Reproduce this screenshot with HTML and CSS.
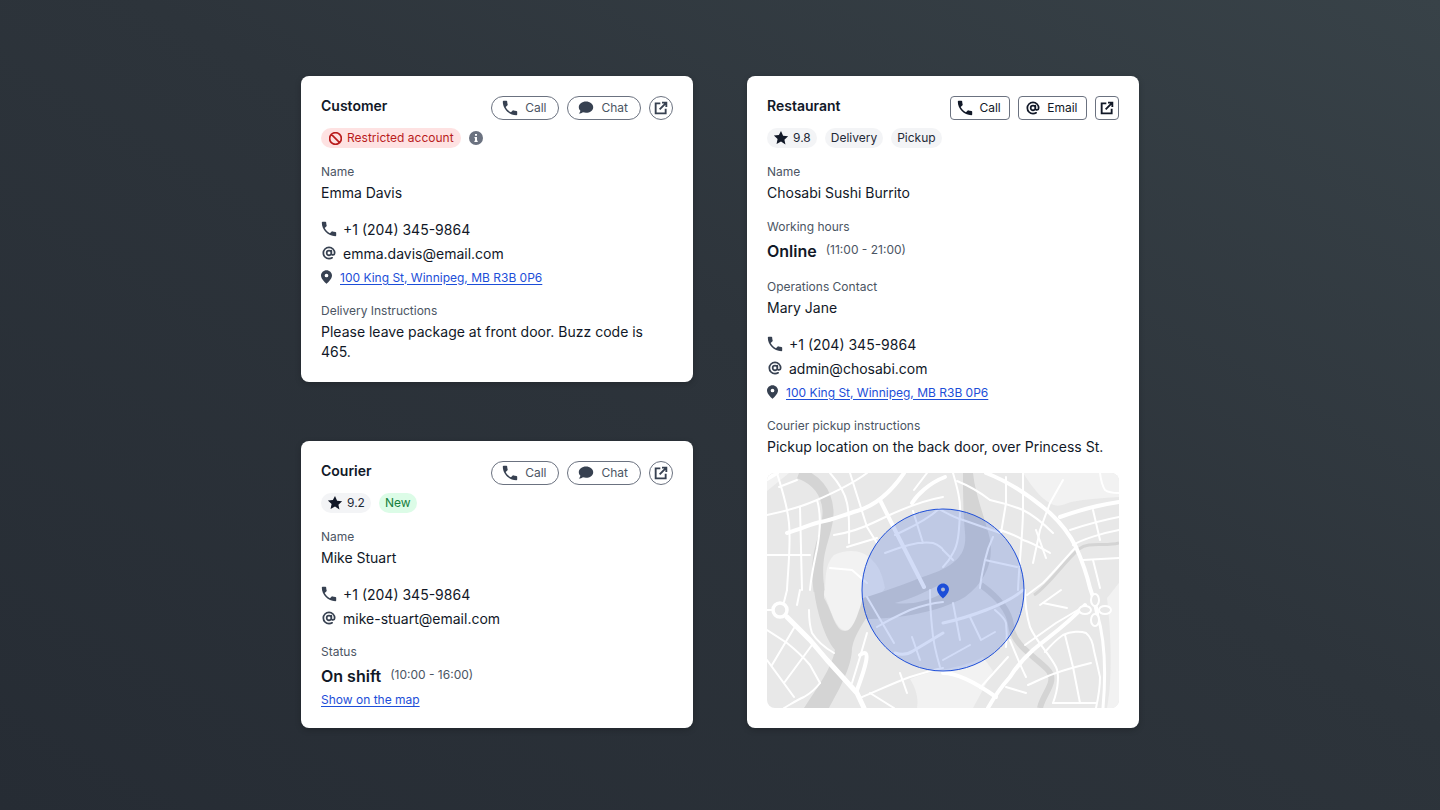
FILE: index.html
```html
<!DOCTYPE html>
<html lang="en">
<head>
    <meta charset="UTF-8">
    <meta name="viewport" content="width=device-width, initial-scale=1.0">
    <title>Order contacts</title>
    <link rel="stylesheet" href="styles.css">
</head>
<body>
    <svg class="sprites" width="0" height="0">
        <symbol id="i-phone" viewBox="2 2 20 20"><path fill="currentColor" d="M6.600 10.800c1.400 2.800 3.800 5.100 6.600 6.600l2.200-2.200c.3-.3.7-.4 1-.2 1.100.4 2.300.6 3.600.6.600 0 1 .4 1 1V20c0 .6-.4 1-1 1C10.600 21 3 13.400 3 4c0-.6.4-1 1-1h3.500c.6 0 1 .4 1 1 0 1.200.2 2.400.6 3.600.1.300 0 .7-.2 1z"/></symbol>
        <symbol id="i-chat" viewBox="2 2 20 20"><path fill="currentColor" d="M12 4c-5 0-9 3.100-9 7 0 1.700.8 3.300 2 4.500-.2 1.400-1 2.600-2 3.500 2 0 3.800-.6 5.200-1.600 1.200.4 2.500.6 3.800.6 5 0 9-3.100 9-7s-4-7-9-7z"/></symbol>
        <symbol id="i-open" viewBox="0 0 24 24"><path fill="none" stroke="currentColor" stroke-width="2.800" d="M11 5H4v15h15v-7M10 14L20 4M13.500 4H20v6.500"/></symbol>
        <symbol id="i-at" viewBox="0 0 24 24"><path fill="none" stroke="currentColor" stroke-width="2.600" stroke-linecap="round" d="M12 15.500a3.500 3.500 0 1 0 0-7 3.500 3.500 0 0 0 0 7zM15.500 8.500v4.200c0 3 5 3 5-.7C20.500 7.300 16.700 3.500 12 3.500S3.500 7.300 3.500 12s3.800 8.500 8.500 8.500c1.800 0 3.300-.4 4.700-1.300"/></symbol>
        <symbol id="i-pin" viewBox="4 2 16 20"><path fill="currentColor" fill-rule="evenodd" d="M12 2c-4.400 0-8 3.500-8 7.900C4 15.500 12 22 12 22s8-6.500 8-12.100C20 5.500 16.400 2 12 2zm0 10.500a2.700 2.700 0 1 1 0-5.400 2.700 2.700 0 0 1 0 5.400z"/></symbol>
        <symbol id="i-star" viewBox="1 1 22 22"><path fill="currentColor" d="M12 2.500l2.900 6.300 6.900.8-5.100 4.700 1.400 6.800L12 16.700l-6.100 3.400 1.400-6.800-5.100-4.700 6.900-.8z"/></symbol>
        <symbol id="i-ban" viewBox="2 2 20 20"><path fill="none" stroke="currentColor" stroke-width="2.600" d="M12 21a9 9 0 1 0 0-18 9 9 0 0 0 0 18zM5.700 5.700l12.600 12.600"/></symbol>
        <symbol id="i-info" viewBox="0 0 14 14"><circle cx="7" cy="7" r="7" fill="currentColor"/><path fill="#fff" d="M6 2.900h2v1.900H6zM5.500 6h2.500v3.700h.7V11H5.400V9.700H6V7.300h-.5z"/></symbol>
    </svg>

    <main class="board">
        <div class="column">
            <section class="card">
                <div class="card-head">
                    <h2>Customer</h2>
                    <div class="actions">
                        <a class="btn pill"><svg class="ico"><use href="#i-phone"/></svg>Call</a>
                        <a class="btn pill"><svg class="ico"><use href="#i-chat"/></svg>Chat</a>
                        <a class="btn pill icon-only"><svg class="ico"><use href="#i-open"/></svg></a>
                    </div>
                </div>
                <div class="tags">
                    <span class="tag danger"><svg class="ico-sm"><use href="#i-ban"/></svg>Restricted account</span>
                    <svg class="info"><use href="#i-info"/></svg>
                </div>
                <div class="field">
                    <div class="label">Name</div>
                    <div class="value">Emma Davis</div>
                </div>
                <ul class="contacts">
                    <li><svg class="ico"><use href="#i-phone"/></svg>+1 (204) 345-9864</li>
                    <li><svg class="ico"><use href="#i-at"/></svg>emma.davis@email.com</li>
                    <li class="address"><svg class="ico-pin"><use href="#i-pin"/></svg><a href="#">100 King St, Winnipeg, MB R3B 0P6</a></li>
                </ul>
                <div class="field">
                    <div class="label">Delivery Instructions</div>
                    <div class="value">Please leave package at front door. Buzz code is 465.</div>
                </div>
            </section>

            <section class="card">
                <div class="card-head">
                    <h2>Courier</h2>
                    <div class="actions">
                        <a class="btn pill"><svg class="ico"><use href="#i-phone"/></svg>Call</a>
                        <a class="btn pill"><svg class="ico"><use href="#i-chat"/></svg>Chat</a>
                        <a class="btn pill icon-only"><svg class="ico"><use href="#i-open"/></svg></a>
                    </div>
                </div>
                <div class="tags">
                    <span class="tag"><svg class="ico-star"><use href="#i-star"/></svg>9.2</span>
                    <span class="tag success">New</span>
                </div>
                <div class="field">
                    <div class="label">Name</div>
                    <div class="value">Mike Stuart</div>
                </div>
                <ul class="contacts">
                    <li><svg class="ico"><use href="#i-phone"/></svg>+1 (204) 345-9864</li>
                    <li><svg class="ico"><use href="#i-at"/></svg>mike-stuart@email.com</li>
                </ul>
                <div class="field">
                    <div class="label">Status</div>
                    <div class="value status"><strong>On shift</strong><span>(10:00 - 16:00)</span></div>
                    <a class="map-link" href="#">Show on the map</a>
                </div>
            </section>
        </div>

        <section class="card">
            <div class="card-head">
                <h2>Restaurant</h2>
                <div class="actions">
                    <a class="btn square"><svg class="ico"><use href="#i-phone"/></svg>Call</a>
                    <a class="btn square"><svg class="ico"><use href="#i-at"/></svg>Email</a>
                    <a class="btn square icon-only"><svg class="ico"><use href="#i-open"/></svg></a>
                </div>
            </div>
            <div class="tags">
                <span class="tag"><svg class="ico-star"><use href="#i-star"/></svg>9.8</span>
                <span class="tag">Delivery</span>
                <span class="tag">Pickup</span>
            </div>
            <div class="field">
                <div class="label">Name</div>
                <div class="value">Chosabi Sushi Burrito</div>
            </div>
            <div class="field">
                <div class="label">Working hours</div>
                <div class="value status"><strong>Online</strong><span>(11:00 - 21:00)</span></div>
            </div>
            <div class="field">
                <div class="label">Operations Contact</div>
                <div class="value">Mary Jane</div>
            </div>
            <ul class="contacts">
                <li><svg class="ico"><use href="#i-phone"/></svg>+1 (204) 345-9864</li>
                <li><svg class="ico"><use href="#i-at"/></svg>admin@chosabi.com</li>
                <li class="address"><svg class="ico-pin"><use href="#i-pin"/></svg><a href="#">100 King St, Winnipeg, MB R3B 0P6</a></li>
            </ul>
            <div class="field">
                <div class="label">Courier pickup instructions</div>
                <div class="value">Pickup location on the back door, over Princess St.</div>
            </div>

            <svg class="map" viewBox="0 0 352 235">
                <rect width="352" height="235" fill="#e8e8e8"/>

                <!-- light blocks -->
                <g fill="#f2f2f2">
                    <path d="M256 0C264 12 274 26 283 30 290 35 296 32 304 29 320 26 336 25 352 24V0z"/>
                    <path d="M67 82C80 76 96 76 106 88 114 96 116 106 118 115 110 128 100 140 92 150 86 158 78 160 72 154 64 144 62 130 57 122 60 108 56 94 67 82z"/>
                    <path d="M340 125C346 118 350 112 352 110V235H340C346 205 344 160 340 125z"/>
                    <path d="M143 206C166 196 196 196 216 184L226 198 206 235H150C152 224 148 214 143 206z"/>
                    <path d="M0 0H22L0 18z"/>
                </g>

                <!-- rivers -->
                <g fill="#d4d4d4">
                    <path d="M47 117C50 140 58 165 68 177 65 195 50 215 37 235H62C70 220 85 195 85 175 88 160 97 150 105 135L95 128C90 145 85 158 78 158 68 158 66 140 57 125L57 110z"/>
                    <path d="M96 125C120 118 150 106 172 98 190 90 200 80 198 60 196 40 196 20 196 0H206C208 20 216 40 222 62 228 85 220 108 198 124 170 140 130 146 98 146z"/>
                </g>
                <g fill="none" stroke="#d4d4d4" stroke-linejoin="round" stroke-linecap="butt">
                    <path stroke-width="11" d="M32 0C48 6 60 18 61 38 62 56 52 70 51 90 50 100 51 110 52 118"/>
                    <path stroke-width="6" d="M214 112C228 122 242 136 244 152 246 172 266 182 280 196 292 208 276 220 273 235"/>
                    <path stroke-width="3" d="M267 122C282 112 296 90 312 76 322 68 338 74 352 70"/>
                </g>
                <path fill="#e8e8e8" d="M128 130C145 126 160 118 176 110L172 122C160 128 145 132 128 130z"/>

                <!-- thick roads -->
                <g fill="none" stroke="#fff" stroke-width="4" stroke-linejoin="round" stroke-linecap="round">
                    <path d="M20 60C34 56 44 51 53 49 66 47 76 42 90 38 110 32 126 16 137 0"/>
                    <path d="M113 27L133 67 157 114"/>
                    <path d="M219 0C240 8 262 22 283 40 296 52 304 64 309 74 316 90 320 102 323 115 326 124 329 132 330 140"/>
                    <path d="M293 44C310 38 330 32 352 29"/>
                    <path stroke-width="5" d="M20 144L43 167 60 187 90 220 97 235"/>
                    <path d="M318 132C300 152 280 165 266 177 256 186 248 196 243 204 234 214 226 226 221 235"/>
                    <path d="M176 200C192 200 212 212 229 224"/>
                    <path d="M93 182C104 174 100 190 90 217M0 6L10 0"/>
                    <path d="M145 30C150 22 162 10 178 4"/>
                    <path stroke-width="3" d="M330 140C336 160 340 190 336 235"/>
                </g>

                <!-- streets -->
                <g fill="none" stroke="#fff" stroke-width="2" stroke-linejoin="round" stroke-linecap="round">
                    <path d="M0 42C20 38 34 34 50 27 66 20 84 12 100 0"/>
                    <path d="M10 0C14 14 20 30 22 50 24 72 21 96 20 117"/>
                    <path d="M12 14L30 7"/>
                    <path d="M33 34L35 117"/>
                    <path d="M50 27C54 40 53 60 50 76 47 90 44 104 43 117"/>
                    <path d="M63 0C72 10 78 20 80 30 83 44 82 58 82 70"/>
                    <path d="M83 0L100 54 110 70"/>
                    <path d="M67 62C80 60 96 55 110 48 130 38 154 28 176 24"/>
                    <path d="M80 74L110 65"/>
                    <path d="M0 82H43"/>
                    <path d="M147 17L160 0"/>
                    <path d="M63 95L85 97 100 110"/>
                    <path d="M186 0C190 14 194 28 193 40 192 56 192 70 186 80 183 86 180 90 176 94"/>
                    <path d="M172 36C180 40 186 44 196 47 210 52 222 56 233 60"/>
                    <path d="M213 115C214 104 216 96 218 87 220 78 223 70 226 64"/>
                    <path d="M218 87L250 94"/>
                    <path d="M176 77L186 87"/>
                    <path d="M128 62C140 56 156 50 172 36M118 80C134 74 150 68 166 70 172 72 176 76 176 77M146 38L156 70"/>
                    <path d="M190 8C200 12 214 20 223 27"/>
                    <path d="M256 0V37C256 60 252 90 251 117"/>
                    <path d="M223 27C236 30 246 33 256 37 266 42 278 52 286 60"/>
                    <path d="M239 4V30L234 60"/>
                    <path d="M296 7L283 30 273 57 266 90"/>
                    <path d="M269 57L279 85"/>
                    <path d="M233 57C242 60 250 63 256 67 266 70 276 76 283 80"/>
                    <path d="M303 57C318 52 336 47 352 44"/>
                    <path d="M326 37L333 67"/>
                    <path d="M306 72C316 66 336 60 352 57"/>
                    <path d="M309 74C296 88 286 100 276 110L260 122"/>
                    <path d="M316 87L352 85"/>
                    <path d="M326 87L333 115"/>
                    <path d="M333 0C334 8 336 14 338 17 342 20 348 20 352 20"/>
                    <path d="M258 117C258 130 260 144 263 154 270 170 282 180 289 194 292 200 292 214 286 230"/>
                    <path d="M278 179C284 172 290 166 296 162 304 158 314 158 319 160 324 164 326 170 327 178 330 190 332 200 333 204 333 214 331 226 329 235"/>
                    <path d="M298 162L306 194 313 230"/>
                    <path d="M261 212C270 208 280 203 289 200 300 196 312 193 324 190"/>
                    <path d="M286 230H329"/>
                    <path d="M213 215L241 184"/>
                    <path d="M239 214L259 220"/>
                    <path d="M243 167C250 184 254 194 259 204"/>
                    <path d="M258 172L289 150 316 134"/>
                    <path d="M294 117L273 132"/>
                    <path d="M276 130L300 135"/>
                    <path d="M0 157C8 162 14 166 20 170 30 178 38 186 43 192L53 210"/>
                    <path d="M27 155L5 192"/>
                    <path d="M45 172L17 210"/>
                    <path d="M0 187L27 224"/>
                    <path d="M17 235C24 231 30 227 37 224 44 220 50 214 53 210"/>
                    <path d="M42 137C42 148 43 154 45 160 50 168 60 176 67 180"/>
                    <path d="M85 210L93 184 100 160"/>
                    <path d="M93 225C110 218 126 210 143 204 156 200 166 197 176 195"/>
                    <path d="M103 220L127 235"/>
                    <path d="M133 200L140 220"/>
                    <path d="M100 124L127 170"/>
                    <path d="M110 154C120 148 132 142 143 137 154 133 166 130 176 129"/>
                    <path d="M145 164L153 187"/>
                    <path d="M163 117C163 130 164 144 165 154 166 168 170 184 173 194"/>
                    <path d="M186 130L193 167"/>
                    <path d="M203 144L214 167 228 159"/>
                    <path d="M176 187L203 172"/>
                    <path d="M228 137C234 142 238 146 239 150 240 158 240 166 239 174"/>
                    <path d="M17 129L20 117"/>
                    <path d="M30 132L33 117"/>
                    <path d="M0 137H6"/>
                    <path stroke-width="3" d="M128 180C134 182 140 182 146 178 156 172 166 166 176 160"/>
                    <path stroke-width="3" d="M176 150C190 147 206 142 219 137 232 132 246 126 256 117"/>
                </g>

                <!-- roundabouts -->
                <circle cx="13" cy="137" r="7" fill="none" stroke="#fff" stroke-width="3.500"/>
                <g class="petals">
                    <ellipse cx="328" cy="127" rx="4" ry="6"/>
                    <ellipse cx="328" cy="147" rx="4" ry="6"/>
                    <ellipse cx="318" cy="137" rx="6" ry="4"/>
                    <ellipse cx="338" cy="137" rx="6" ry="4"/>
                </g>

                <!-- delivery radius and restaurant pin -->
                <circle class="radius" cx="176" cy="117" r="81"/>
                <path fill="#1d4ed8" fill-rule="evenodd" d="M176 110.500c-3.300 0-6 2.600-6 5.800 0 4.200 6 9.200 6 9.200s6-5 6-9.200c0-3.200-2.700-5.800-6-5.800zm0 7.900a2 2 0 1 1 0-4 2 2 0 0 1 0 4z"/>
            </svg>
        </section>
    </main>
</body>
</html>
```

FILE: styles.css
```css
* {
    box-sizing: border-box;
}
html, body {
    height: 100%;
}
body {
    margin: 0;
    padding-top: 76px;
    display: flex;
    align-items: flex-start;
    justify-content: center;
    font-family: Inter, "Liberation Sans", sans-serif;
    color: #111827;
    background: linear-gradient(to top right, #262c34 0%, #2d343b 55%, #384248 100%);
}
.sprites {
    position: absolute;
}
.board {
    display: grid;
    grid-template-columns: 392px 392px;
    gap: 54px;
}
.column {
    display: flex;
    flex-direction: column;
    justify-content: space-between;
}
.card {
    display: flex;
    flex-direction: column;
    gap: 16px;
    padding: 20px;
    background-color: #fff;
    border-radius: 8px;
    box-shadow: 0 2px 6px rgba(0,0,0,0.2);
}
.card-head {
    display: flex;
    justify-content: space-between;
    align-items: flex-start;
    margin-bottom: -8px;
}
h2 {
    margin: 0;
    font-size: 14px;
    line-height: 20px;
    font-weight: 600;
}
.actions {
    display: flex;
    gap: 8px;
}
.btn {
    display: flex;
    align-items: center;
    height: 24px;
    font-size: 12px;
    line-height: 16px;
    border: 1px solid #6b7280;
    background-color: #fff;
}
.pill {
    gap: 7px;
    padding: 0 12px 0 10px;
    border-radius: 12px;
    color: #4b5563;
}
.pill .ico {
    color: #374151;
}
.square {
    gap: 6px;
    padding: 0 8.5px 0 6px;
    border-radius: 4px;
    color: #111827;
}
.btn.icon-only {
    justify-content: center;
    width: 24px;
    padding: 0;
}
.ico {
    flex: none;
    width: 16px;
    height: 16px;
}
.ico-sm {
    flex: none;
    width: 13px;
    height: 13px;
}
.ico-star {
    flex: none;
    width: 16px;
    height: 16px;
    color: #111827;
}
.ico-pin {
    flex: none;
    width: 11px;
    height: 14px;
    color: #374151;
}
.tags {
    display: flex;
    align-items: center;
    gap: 8px;
}
.tag {
    display: flex;
    align-items: center;
    gap: 4px;
    height: 20px;
    padding: 0 6px;
    font-size: 12px;
    line-height: 16px;
    border-radius: 10px;
    color: #1f2937;
    background-color: #f3f4f6;
}
.tag.danger {
    gap: 5px;
    padding: 0 7px 0 8px;
    color: #b91c1c;
    background-color: #fee2e2;
}
.tag.success {
    color: #15803d;
    background-color: #dcfce7;
}
.info {
    width: 14px;
    height: 14px;
    color: #6b7280;
}
.label {
    margin-bottom: 3px;
    font-size: 12px;
    line-height: 16px;
    color: #4b5563;
}
.value {
    font-size: 14px;
    line-height: 20px;
}
.status {
    display: flex;
    align-items: center;
    gap: 9px;
    height: 25px;
    margin-top: 1px;
    line-height: 24px;
}
.status strong {
    font-size: 16px;
    font-weight: 600;
}
.status span {
    margin-bottom: 1px;
    font-size: 12px;
    color: #4b5563;
}
.map-link {
    display: block;
    padding-top: 4px;
    font-size: 12px;
    line-height: 16px;
    color: #1d4ed8;
    text-decoration: underline;
    text-underline-offset: 2px;
}
.contacts {
    display: flex;
    flex-direction: column;
    gap: 4px;
    margin: 0;
    padding: 0;
    list-style: none;
}
.contacts li {
    display: flex;
    align-items: center;
    gap: 6px;
    height: 20px;
    font-size: 14px;
}
.contacts li .ico {
    color: #374151;
}
.contacts .address {
    gap: 8px;
    font-size: 12px;
}
.address a {
    color: #1d4ed8;
    text-decoration: underline;
    text-underline-offset: 2px;
}
.map {
    display: block;
    width: 352px;
    height: 235px;
    border-radius: 8px;
}
.petals {
    fill: #e8e8e8;
    stroke: #fff;
    stroke-width: 2;
}
.radius {
    fill: rgba(29,78,216,0.2);
    stroke: #1d4ed8;
    stroke-width: 1;
}
```
